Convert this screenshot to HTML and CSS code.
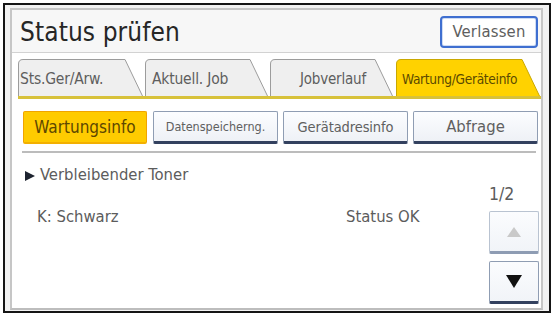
FILE: index.html
```html
<!DOCTYPE html>
<html lang="de">
<head>
<meta charset="utf-8">
<title>Status prüfen</title>
<link rel="stylesheet" href="styles.css">
</head>
<body>
<div class="frame">
  <div class="panel">
    <header class="head">
      <h1 class="title">Status prüfen</h1>
      <button class="exit">Verlassen</button>
    </header>
    <nav class="tabs">
      <div class="tab t1">
        <svg class="tab-bg" width="125" height="37" viewBox="0 0 125 37"><path d="M0.5 37 V5 Q0.5 0.5 5 0.5 H107 L124.5 37"/></svg>
        <span class="tab-label">Sts.Ger/Arw.</span>
      </div>
      <div class="tab t2">
        <svg class="tab-bg" width="123" height="37" viewBox="0 0 123 37"><path d="M0.5 37 V5 Q0.5 0.5 5 0.5 H105 L122.5 37"/></svg>
        <span class="tab-label">Aktuell. Job</span>
      </div>
      <div class="tab t3">
        <svg class="tab-bg" width="123" height="37" viewBox="0 0 123 37"><path d="M0.5 37 V5 Q0.5 0.5 5 0.5 H105 L122.5 37"/></svg>
        <span class="tab-label">Jobverlauf</span>
      </div>
      <div class="tab t4 active">
        <svg class="tab-bg" width="144" height="37" viewBox="0 0 144 37"><path d="M0.5 37 V5 Q0.5 0.5 5 0.5 H126 L143.5 37"/></svg>
        <span class="tab-label">Wartung/Geräteinfo</span>
      </div>
    </nav>
    <div class="subtabs">
      <button class="sub on s1">Wartungsinfo</button>
      <button class="sub s2">Datenspeicherng.</button>
      <button class="sub s3">Gerätadresinfo</button>
      <button class="sub s4">Abfrage</button>
    </div>
    <div class="rule"></div>
    <div class="content">
      <div class="list">
        <div class="section"><span class="arrow"></span>Verbleibender Toner</div>
        <div class="row">
          <span class="name">K: Schwarz</span>
          <span class="state">Status OK</span>
        </div>
      </div>
      <div class="pager">
        <div class="page">1/2</div>
        <button class="pbtn up"><span class="tri-up"></span></button>
        <button class="pbtn down"><span class="tri-down"></span></button>
      </div>
    </div>
  </div>
</div>
</body>
</html>
```
FILE: styles.css
```css
* { box-sizing: border-box; }
html, body { margin: 0; padding: 0; background: #ffffff; }
body {
  font-family: "DejaVu Sans Condensed", "DejaVu Sans", sans-serif;
  font-stretch: condensed;
  color: #5c5c5c;
}
button { font-family: inherit; font-stretch: condensed; padding: 0; margin: 0; cursor: pointer; }

.frame {
  margin: 3px 0 0 3px;
  width: 548px;
  height: 310px;
  border: 2px solid #151515;
  padding: 3px 6px 1px 5px;
  background: #f2f2f2;
}
.panel {
  width: 100%;
  height: 100%;
  border: 2px solid #c6c6c6;
  border-bottom-color: #bdbdbd;
  background: #ffffff;
  display: flex;
  flex-direction: column;
}

.head {
  height: 43px;
  flex: none;
  background: #f7f7f7;
  border-bottom: 1px solid #d2d2d2;
  display: flex;
  align-items: center;
  justify-content: space-between;
  padding: 0 3px 0 8px;
}
.title {
  margin: 0;
  font-size: 26px;
  font-weight: normal;
  color: #262626;
  line-height: 30px;
  padding-top: 2px;
  letter-spacing: 0.1px;
}
.exit {
  width: 98px;
  height: 32px;
  background: #ffffff;
  border: 2px solid #3f6fd0;
  border-radius: 4px;
  box-shadow: inset 0 0 0 1px #cfdcf3;
  color: #5e5e5e;
  font-size: 16.5px;
  letter-spacing: 0.2px;
  margin-top: 1px;
}

.tabs {
  flex: none;
  margin: 6px 0 0 6px;
  height: 40px;
  border-bottom: 3px solid #d7c13a;
  display: flex;
  align-items: flex-end;
}
.tab {
  position: relative;
  height: 37px;
  flex: none;
  display: flex;
  align-items: center;
  padding-left: 2px;
  margin-right: 2px;
}
.t1 { width: 125px; }
.t2 { width: 123px; padding-left: 7px; }
.t3 { width: 123px; margin-right: 3px; padding-left: 30px; }
.t4 { width: 144px; padding-left: 6px; }
.tab-bg { position: absolute; left: 0; top: 0; }
.tab-bg path { fill: #efefef; stroke: #9c9c9c; stroke-width: 1; }
.active .tab-bg path { fill: #ffd200; stroke: #c9a800; }
.tab-label {
  position: relative;
  font-size: 15.5px;
  color: #5e5e5e;
  letter-spacing: -0.2px;
  padding-top: 3px;
}
.t3 .tab-label { font-size: 15px; }
.t4 .tab-label { color: #5b4a00; font-size: 13.6px; letter-spacing: -0.3px; }

.subtabs {
  flex: none;
  margin-top: 12px;
  padding-left: 11px;
  display: flex;
  height: 33px;
}
.sub {
  height: 33px;
  width: 125px;
  margin-left: 5px;
  background: linear-gradient(#fcfdff, #eef1f6);
  border: 1px solid #8f9db3;
  border-bottom: 3px solid #33415f;
  border-radius: 2px;
  color: #606060;
  font-size: 14px;
}
.s1 { margin-left: 0; width: 124px; }
.s2 { margin-left: 6px; font-size: 12.5px; }
.s3 { font-size: 14.5px; letter-spacing: -0.1px; }
.s4 { font-size: 16.5px; }
.sub.on {
  background: #ffcb00;
  border: 1px solid #f0a400;
  border-bottom: 2px solid #f3b000;
  color: #5d4700;
  font-size: 17px;
}

.rule {
  flex: none;
  margin: 7px 0 0 10px;
  width: 514px;
  height: 2px;
  background: #bcbcbc;
}

.content {
  flex: 1;
  display: flex;
  justify-content: space-between;
}
.list { padding: 12px 0 0 13px; }
.section {
  font-size: 16.5px;
  line-height: 20px;
  color: #5c5c5c;
  display: flex;
  align-items: center;
}
.arrow {
  width: 0;
  height: 0;
  border-top: 5px solid transparent;
  border-bottom: 5px solid transparent;
  border-left: 10px solid #1e2430;
  margin-right: 5px;
  margin-top: 1px;
}
.row {
  margin-top: 22px;
  padding-left: 12px;
  display: grid;
  grid-template-columns: 309px auto;
  font-size: 16.5px;
  line-height: 20px;
  color: #5c5c5c;
}

.pager {
  width: 50px;
  margin-right: 2px;
  padding-top: 31px;
  display: flex;
  flex-direction: column;
}
.page {
  font-size: 17.5px;
  line-height: 20px;
  color: #5c5c5c;
  height: 20px;
}
.pbtn {
  width: 50px;
  height: 43px;
  background: linear-gradient(#fbfcfe, #f1f4f8);
  border: 1px solid #b9c3d1;
  border-bottom: 3px solid #8e9cb3;
  border-radius: 2px;
  display: flex;
  align-items: center;
  justify-content: center;
}
.up { margin-top: 7px; }
.down {
  margin-top: 7px;
  border-color: #8f9db3;
  border-bottom-color: #33415f;
}
.tri-up {
  width: 0; height: 0;
  border-left: 7px solid transparent;
  border-right: 7px solid transparent;
  border-bottom: 10px solid #c9c9c9;
}
.tri-down {
  width: 0; height: 0;
  border-left: 8px solid transparent;
  border-right: 8px solid transparent;
  border-top: 13px solid #111;
}
```
